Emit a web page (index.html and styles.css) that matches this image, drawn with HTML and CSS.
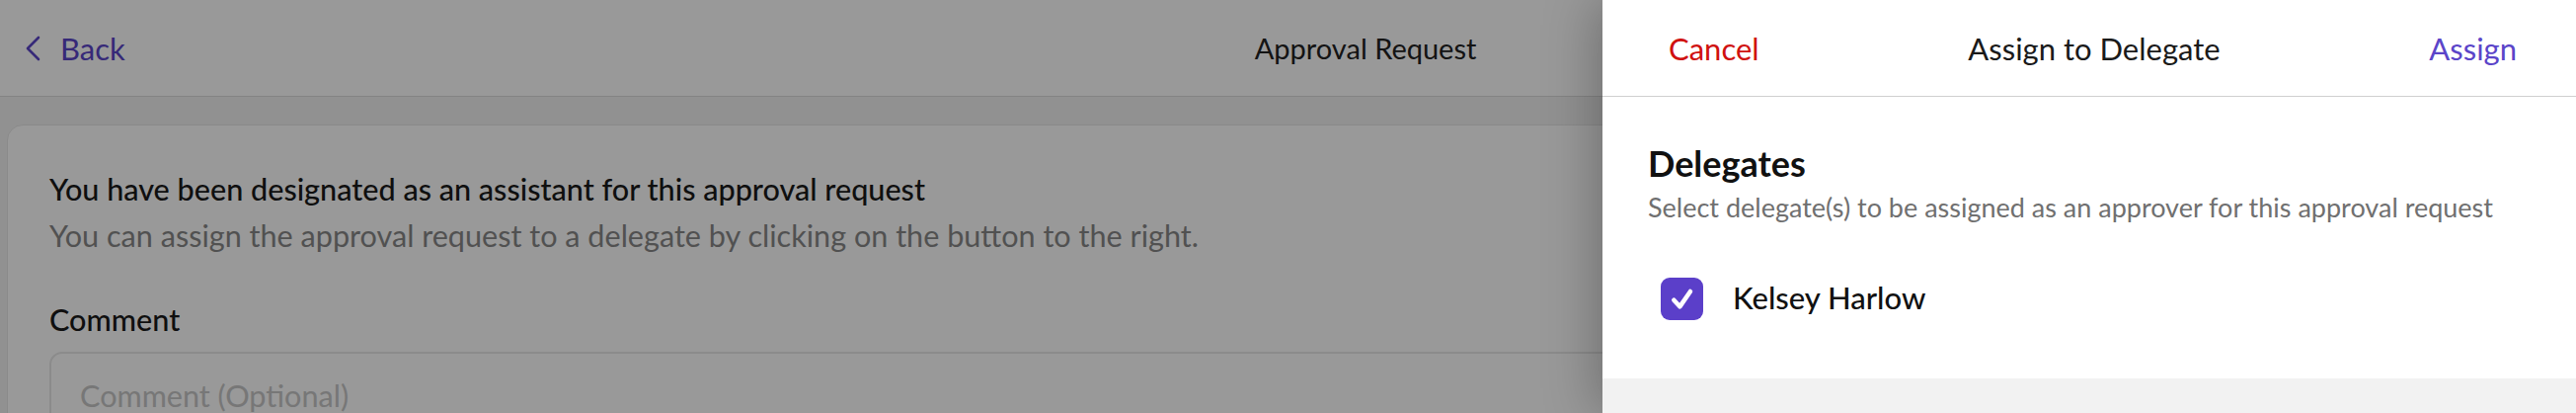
FILE: index.html
```html
<!DOCTYPE html>
<html>
<head>
<meta charset="utf-8">
<link rel="stylesheet" href="styles.css">
</head>
<body>
<div class="page">
  <header class="topbar">
    <a class="back">
      <svg class="chev" viewBox="0 0 18 28" width="18" height="28"><path d="M15 3 L4 14 L15 25" fill="none" stroke="currentColor" stroke-width="2.6" stroke-linecap="round" stroke-linejoin="round"/></svg>
      <span>Back</span>
    </a>
    <div class="title">Approval Request</div>
  </header>
  <main class="content">
    <section class="card">
      <h2 class="card-title">You have been designated as an assistant for this approval request</h2>
      <p class="card-sub">You can assign the approval request to a delegate by clicking on the button to the right.</p>
      <label class="field-label">Comment</label>
      <div class="input">Comment (Optional)</div>
    </section>
  </main>
</div>
<div class="overlay"></div>
<aside class="panel">
  <div class="panel-head">
    <span class="cancel">Cancel</span>
    <span class="panel-title">Assign to Delegate</span>
    <span class="assign">Assign</span>
  </div>
  <div class="panel-body">
    <h3 class="sec-title">Delegates</h3>
    <p class="sec-sub">Select delegate(s) to be assigned as an approver for this approval request</p>
    <div class="option">
      <span class="check">
        <svg viewBox="0 0 24 24" width="32" height="32"><path d="M5.5 12.5 L10 17.5 L18 6" fill="none" stroke="#fff" stroke-width="3.4" stroke-linecap="round" stroke-linejoin="round"/></svg>
      </span>
      <span class="opt-name">Kelsey Harlow</span>
    </div>
  </div>
  <div class="panel-foot"></div>
</aside>
</body>
</html>
```
FILE: styles.css
```css
* { box-sizing: border-box; }
html, body { margin: 0; padding: 0; }
body {
  width: 2609px;
  height: 418px;
  overflow: hidden;
  font-family: Lato, "Open Sans", "Liberation Sans", sans-serif;
  background: #f2f2f2;
  position: relative;
}
.page { display: flex; flex-direction: column; height: 418px; overflow: hidden; }
.topbar {
  flex-shrink: 0;
  height: 98px;
  background: #fff;
  border-bottom: 1px solid #dadada;
  display: flex;
  align-items: center;
  padding-left: 24px;
}
.back {
  display: flex;
  align-items: center;
  gap: 19px;
  color: #5b45c9;
  font-size: 31px;
}
.chev { margin-top: 1px; }
.title {
  margin-left: 1144px;
  font-size: 29px;
  color: #222;
}
.content { padding: 28px 0 0 7px; flex-shrink: 0; }
.card {
  background: #fff;
  border: 1px solid #e6e6e6;
  border-radius: 16px;
  height: 320px;
  padding: 46px 0 0 42px;
}
.card-title {
  margin: 0;
  font-size: 30.6px;
  font-weight: 500;
  color: #1a1a1a;
  line-height: 38px;
}
.card-sub {
  margin: 9px 0 0;
  font-size: 30.6px;
  font-weight: 400;
  color: #888;
  line-height: 38px;
}
.field-label {
  display: block;
  margin-top: 47px;
  font-size: 30.6px;
  font-weight: 500;
  color: #1a1a1a;
  line-height: 38px;
}
.input {
  margin-top: 13px;
  border: 2px solid #e8e8e8;
  border-radius: 13px;
  height: 90px;
  padding: 24px 0 0 29px;
  font-size: 30.6px;
  line-height: 38px;
  color: #c6c6c6;
}
.overlay {
  position: absolute;
  inset: 0;
  background: rgba(0,0,0,0.4);
}
.panel {
  position: absolute;
  top: 0;
  right: 0;
  width: 986px;
  height: 418px;
  background: #fff;
  box-shadow: -6px 0 50px rgba(0,0,0,0.28);
  display: flex;
  flex-direction: column;
}
.panel-head {
  flex-shrink: 0;
  height: 98px;
  border-bottom: 1px solid #d0d0d0;
  display: flex;
  align-items: center;
  justify-content: space-between;
  padding: 0 60px 0 67px;
  font-size: 31px;
}
.cancel { color: #d0110f; }
.panel-title { color: #1a1a1a; }
.assign { color: #5b45c9; }
.panel-body {
  flex: 1;
  padding: 45px 0 0 46px;
}
.sec-title {
  margin: 0;
  font-size: 36px;
  font-weight: 700;
  color: #111;
  line-height: 44px;
}
.sec-sub {
  margin: 6px 0 0;
  font-size: 27px;
  color: #707070;
  line-height: 34px;
}
.option {
  display: flex;
  align-items: center;
  gap: 30px;
  margin: 54px 0 0 13px;
}
.check {
  width: 43px;
  height: 43px;
  border-radius: 9px;
  background: #5b3fc9;
  display: flex;
  align-items: center;
  justify-content: center;
}
.opt-name {
  font-size: 31px;
  font-weight: 500;
  color: #111;
  margin-top: -3px;
}
.panel-foot {
  flex-shrink: 0;
  height: 35px;
  background: #f2f2f2;
}
```
